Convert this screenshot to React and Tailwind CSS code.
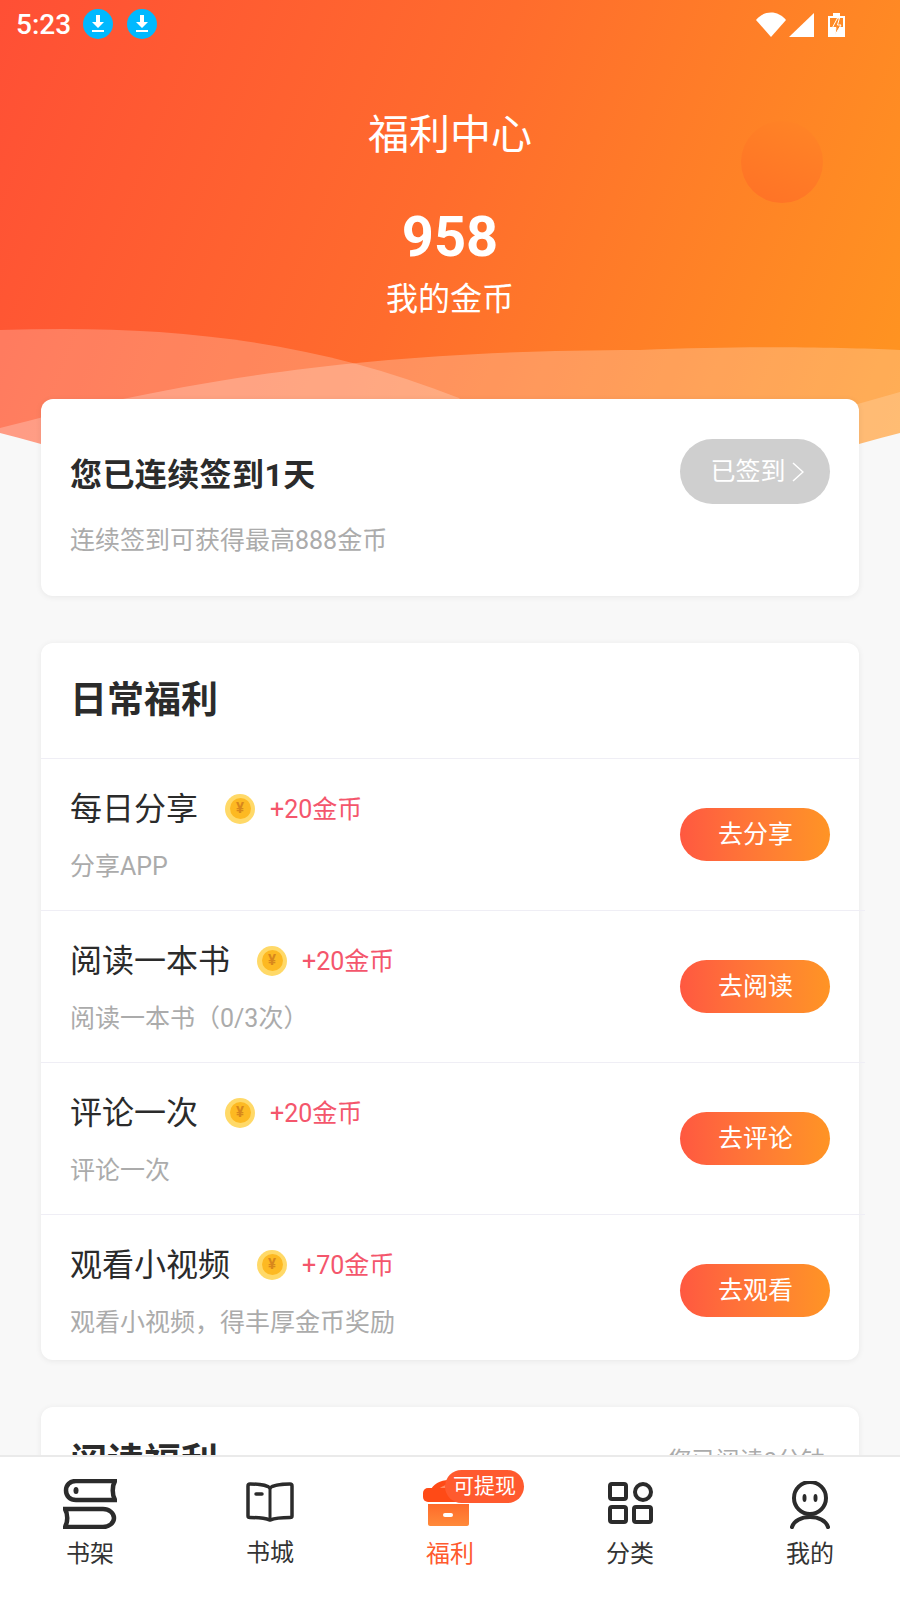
import React from "react";

const tasks = [
  { title: "每日分享", coins: "+20金币", desc: "分享APP", action: "去分享" },
  { title: "阅读一本书", coins: "+20金币", desc: "阅读一本书（0/3次）", action: "去阅读" },
  { title: "评论一次", coins: "+20金币", desc: "评论一次", action: "去评论" },
  { title: "观看小视频", coins: "+70金币", desc: "观看小视频，得丰厚金币奖励", action: "去观看" },
];

const DownloadBadge = () => (
  <svg width="30" height="30" viewBox="0 0 30 30">
    <circle cx="15" cy="15" r="15" fill="#00b9ff" />
    <path d="M13 6h4v7h4l-6 6-6-6h4z" fill="#fff" />
    <rect x="9" y="21" width="12" height="2" fill="#fff" />
  </svg>
);

const StatusBar = () => (
  <div className="relative z-10 flex items-center h-12 pl-4 text-white">
    <span className="mt-[2px] text-[28px] font-medium leading-none mr-3">5:23</span>
    <div className="flex gap-3.5">
      <DownloadBadge />
      <DownloadBadge />
    </div>
    <svg className="ml-auto mr-[55px]" width="89" height="25" viewBox="0 0 89 25">
      <path d="M0 8C8 -2 22 -2 30 8L15 25z" fill="#fff" />
      <path d="M58 1v24H33z" fill="#fff" />
      <path d="M77 1h7v3h5v21H72V4h5z" fill="#fff" />
      <path d="M74 6h13v9H74z" fill="#ff8a25" />
      <path d="M81.500 6l-5 9.500h3.500l-1 7.500 6-10h-3.500l2-7z" fill="#ff8a25" stroke="#fff" strokeWidth="1" />
    </svg>
  </div>
);

const Coin = () => (
  <div className="flex items-center justify-center w-[30px] h-[30px] -mt-[1px] rounded-full bg-[#ffd968]">
    <div className="flex items-center justify-center w-[21px] h-[21px] rounded-full bg-[#fdb922] text-[15px] font-bold leading-none text-[#d8871c]">
      ¥
    </div>
  </div>
);

const TaskRow = ({ task, last }) => (
  <div className={`flex items-start justify-between pl-[29px] ${last ? "h-[145px] pr-[29px]" : "h-[152px] -mr-[6px] pr-[35px] border-b border-[#efeef5]"}`}>
    <div className="pt-[27px]">
      <div className="flex items-center h-[46px]">
        <span className="text-[32px] leading-none text-[#2b2b2b]">{task.title}</span>
        <span className="ml-[27px]">
          <Coin />
        </span>
        <span className="ml-[15px] text-[25px] leading-none text-[#f4566c]">{task.coins}</span>
      </div>
      <div className="mt-[22px] text-[25px] leading-none text-[#ababab]">{task.desc}</div>
    </div>
    <button className="w-[150px] h-[53px] mt-[49px] pt-[1px] pl-[1px] rounded-full bg-gradient-to-r from-[#ff5840] to-[#ff9424] text-[25px] text-white">
      {task.action}
    </button>
  </div>
);

const ShelfIcon = () => (
  <svg className="-mt-[2px]" width="54" height="50" viewBox="0 0 54 50" fill="none" stroke="#2b2b2b" strokeWidth="4.500">
    <path d="M52 2H13C7 2 3 6 3 11.500s4 9.500 10 9.500h39c-3-5-3-14 0-19z" />
    <path d="M2 30h38c6 0 11 4 11 9s-5 9-11 9H2c3-5 3-13 0-18z" />
    <ellipse cx="13" cy="11.500" rx="2.500" ry="3.500" fill="#2b2b2b" stroke="none" />
  </svg>
);

const BookIcon = () => (
  <svg className="-mt-[6px]" width="48" height="40" viewBox="0 0 48 40" fill="none" stroke="#2b2b2b" strokeWidth="3.500" strokeLinejoin="round">
    <path d="M24 6C21 3 10 2 4 2 2.500 2 2 3 2 4v30c0 1 .5 1.500 2 1.500 8 0 16 1 20 2.500 4-1.500 12-2.500 20-2.500 1.500 0 2-.5 2-1.500V4c0-1-.5-2-2-2-6 0-17 1-20 4z" />
    <path d="M24 6v32" strokeWidth="3" />
    <path d="M10 12h6" strokeLinecap="round" />
  </svg>
);

const GiftIcon = () => (
  <svg className="-mt-[4px] -ml-[3px]" width="51" height="46" viewBox="0 0 51 46">
    <defs>
      <linearGradient id="gift" x1="0" y1="0" x2="0" y2="1">
        <stop offset="0" stopColor="#ff6a2a" />
        <stop offset="1" stopColor="#ff8a3a" />
      </linearGradient>
    </defs>
    <path d="M7 12C9 4 18 0 25.500 0S42 4 44 12z" fill="#ff4a16" />
    <path d="M15 10c2-3 6-5 10.500-5s8 2 10.500 5z" fill="#ff8a60" />
    <rect x="0" y="8" width="51" height="14" rx="5" fill="#ff4a16" />
    <path d="M5 24h41v20c0 1-1 2-2 2H7c-1 0-2-1-2-2z" fill="url(#gift)" />
    <rect x="20" y="33" width="10" height="4" rx="2" fill="#fff" />
  </svg>
);

const GridIcon = () => (
  <svg className="-mt-[4px]" width="45" height="42" viewBox="0 0 45 42" fill="none" stroke="#2b2b2b" strokeWidth="4">
    <rect x="2" y="2" width="16" height="15" rx="2" />
    <circle cx="35" cy="10" r="8" />
    <rect x="2" y="25" width="16" height="15" rx="2" />
    <rect x="26" y="25" width="17" height="15" rx="2" />
  </svg>
);

const PersonIcon = () => (
  <svg width="40" height="48" viewBox="0 0 40 48" fill="none" stroke="#2b2b2b" strokeWidth="4">
    <circle cx="20" cy="17" r="16" />
    <path d="M2 46c2-6 9-10 18-10s16 4 18 10" strokeLinecap="round" />
    <ellipse cx="14.500" cy="17" rx="2" ry="4" fill="#2b2b2b" stroke="none" />
    <ellipse cx="25.500" cy="17" rx="2" ry="4" fill="#2b2b2b" stroke="none" />
  </svg>
);

const NavItem = ({ icon, label, active, badge, raised }) => (
  <div className="relative flex-1 flex flex-col items-center">
    <div className="flex items-center justify-center h-[50px]">{icon}</div>
    <span className={`${raised ? "mt-[11px]" : "mt-3"} text-[24px] leading-none ${active ? "text-[#ff5a2e]" : "text-[#333333]"}`}>{label}</span>
    {badge && (
      <span className="absolute left-[85px] -top-[10px] px-[8px] h-[33px] flex items-center rounded-full bg-[#ff5a2e] text-[21px] text-white leading-none">
        {badge}
      </span>
    )}
  </div>
);

export default function App() {
  return (
    <div
      className="relative flex flex-col h-[1600px] w-[900px] overflow-hidden bg-[#f8f8f8]"
      style={{ fontFamily: '"Roboto", "Noto Sans CJK SC", sans-serif' }}
    >
      <div className="flex-1 min-h-0 overflow-hidden">
        <div className="relative h-[444px] bg-[linear-gradient(112deg,#ff4f35_0%,#ff6c2d_48%,#ff9620_100%)]">
          <svg className="absolute inset-0" width="900" height="444" viewBox="0 0 900 444">
            <defs>
              <linearGradient id="sun" x1="0.8" y1="0" x2="0.3" y2="1">
                <stop offset="0" stopColor="#ff8426" />
                <stop offset="1" stopColor="#ff7326" />
              </linearGradient>
            </defs>
            <circle cx="782" cy="162" r="41" fill="url(#sun)" />
            <path d="M0 330C150 325 300 335 459 398L500 444H0z" fill="#fff" fillOpacity="0.22" />
            <path d="M0 428C150 390 330 350 640 350C760 345 860 348 900 350V444H0z" fill="#fff" fillOpacity="0.24" />
            <path d="M840 409L900 392V444H840z" fill="#fff" fillOpacity="0.18" />
            <path d="M0 433Q20 438 41 444H0zM900 433Q880 438 859 444H900z" fill="#f8f8f8" />
          </svg>
          <div className="relative">
            <StatusBar />
            <div className="flex flex-col items-center text-white">
              <div className="mt-[67px] text-[41px] leading-none">福利中心</div>
              <div className="mt-[53px] text-[56px] font-bold leading-none">958</div>
              <div className="mt-[18px] text-[32px] leading-none">我的金币</div>
            </div>
          </div>
        </div>

        <div className="relative -mt-[45px] mx-[41px] h-[197px] rounded-xl bg-white shadow-[0_1px_6px_rgba(0,0,0,0.07)] flex items-start justify-between px-[29px]">
          <div>
            <div className="mt-[60px] text-[32px] font-bold leading-none tracking-[0.4px] text-[#2b2b2b]">您已连续签到1天</div>
            <div className="mt-[37px] text-[25px] leading-none text-[#ababab]">连续签到可获得最高888金币</div>
          </div>
          <div className="mt-[40px] flex items-center justify-center gap-1.5 w-[150px] h-[65px] pl-1 rounded-full bg-[#cfcfcf] text-[25px] text-white">
            已签到
            <svg width="12" height="20" viewBox="0 0 12 20" fill="none" stroke="#fff" strokeWidth="1.500">
              <path d="M1 1l10 9-10 9" />
            </svg>
          </div>
        </div>

        <div className="mt-[47px] mx-[41px] rounded-xl bg-white shadow-[0_1px_6px_rgba(0,0,0,0.07)]">
          <div className="flex items-center h-[116px] px-[29px] border-b border-[#efeef5] text-[37px] font-bold text-[#2b2b2b]">
            日常福利
          </div>
          {tasks.map((task, i) => (
            <TaskRow key={task.title} task={task} last={i === tasks.length - 1} />
          ))}
        </div>

        <div className="mt-[47px] mx-[41px] h-[200px] rounded-t-xl bg-white shadow-[0_1px_6px_rgba(0,0,0,0.07)] flex items-start justify-between pl-[29px] pr-[34px] pt-[37px]">
          <span className="text-[37px] font-bold leading-none text-[#2b2b2b]">阅读福利</span>
          <span className="mt-[5px] text-[24px] leading-none text-[#ababab]">您已阅读0分钟</span>
        </div>
      </div>

      <div className="relative flex shrink-0 h-[145px] pt-[23px] bg-white border-t-2 border-[#eaeaea]">
        <NavItem icon={<ShelfIcon />} label="书架" />
        <NavItem icon={<BookIcon />} label="书城" raised />
        <NavItem icon={<GiftIcon />} label="福利" active badge="可提现" />
        <NavItem icon={<GridIcon />} label="分类" />
        <NavItem icon={<PersonIcon />} label="我的" />
      </div>
    </div>
  );
}
